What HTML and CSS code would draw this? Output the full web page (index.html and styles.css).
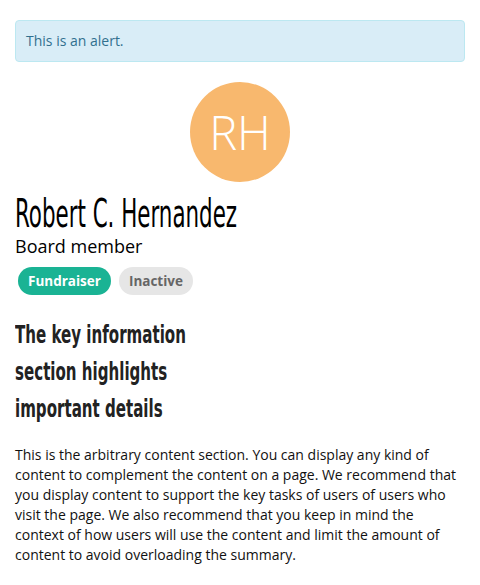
FILE: index.html
```html
<!DOCTYPE html>
<html>
<head>
<meta charset="utf-8">
<link rel="stylesheet" href="styles.css">
</head>
<body>
<div class="page">
  <div class="alert">This is an alert.</div>
  <div class="avatar-wrap"><div class="avatar">RH</div></div>
  <h1 class="name"><span class="narrow">Robert C. Hernandez</span></h1>
  <div class="role">Board member</div>
  <div class="badges">
    <span class="badge badge-green">Fundraiser</span>
    <span class="badge badge-grey">Inactive</span>
  </div>
  <h2 class="key"><span class="narrow key-inner">The key information section highlights important details</span></h2>
  <p class="content">This is the arbitrary content section. You can display any kind of content to complement the content on a page. We recommend that you display content to support the key tasks of users of users who visit the page. We also recommend that you keep in mind the context of how users will use the content and limit the amount of content to avoid overloading the summary.</p>
</div>
</body>
</html>
```
FILE: styles.css
```css
html, body { margin: 0; padding: 0; background: #fff; }
.page {
  padding: 20px 15px 0 15px;
  font-family: "Open Sans", "Liberation Sans", sans-serif;
  color: #111;
}
.alert {
  background: #d9edf7;
  border: 1px solid #bce8f1;
  border-radius: 4px;
  color: #31708f;
  font-size: 14px;
  line-height: 20px;
  padding: 10px 10px;
}
.avatar-wrap { display: flex; justify-content: center; margin-top: 20px; }
.avatar {
  width: 100px; height: 100px; border-radius: 50%;
  background: #f8b86e; color: #fff;
  display: flex; align-items: center; justify-content: center;
  font-size: 47px; font-weight: 300;
}
.narrow {
  display: inline-block;
  transform-origin: left center;
}
.name {
  font-family: "DejaVu Sans Condensed", sans-serif;
  font-weight: 400; font-size: 39px; line-height: 38px;
  margin: 13px 0 0 0; color: #000;
  white-space: nowrap;
}
.name .narrow { transform: scaleX(0.61); }
.role { font-size: 18px; line-height: 24px; color: #000; margin-top: 1px; }
.badges { display: flex; gap: 8px; margin: 9px 0 0 3px; }
.badge {
  font-size: 13.5px; font-weight: 700; line-height: 18px;
  padding: 5px 10px; border-radius: 14px;
}
.badge-green { background: #1ab394; color: #fff; }
.badge-grey { background: #e6e6e6; color: #666; }
.key {
  font-family: "DejaVu Sans Condensed", sans-serif;
  font-weight: 700; font-size: 25px; line-height: 37px;
  margin: 21px 0 0 0; color: #222;
}
.key-inner { width: 275px; transform: scaleX(0.67); transform-origin: left top; }
.content { font-size: 14px; line-height: 20px; margin: 18px 0 0 0; color: #111; }
```
